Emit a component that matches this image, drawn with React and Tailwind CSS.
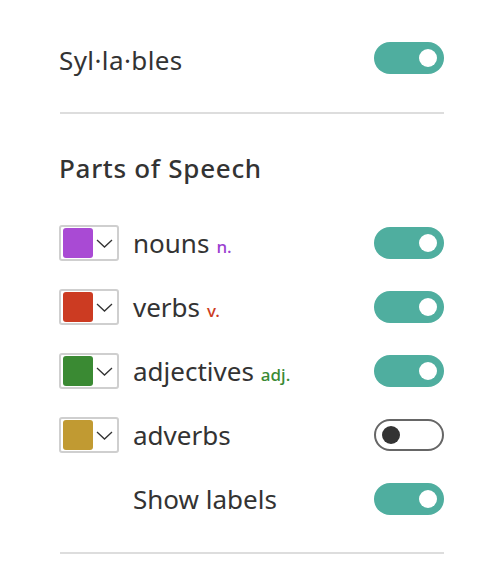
const rows = [
  { label: 'nouns', abbr: 'n.', color: '#a94ad4', abbrColor: 'text-[#9b3fd0]', on: true },
  { label: 'verbs', abbr: 'v.', color: '#cc3b22', abbrColor: 'text-[#cc3b22]', on: true },
  { label: 'adjectives', abbr: 'adj.', color: '#3a8a33', abbrColor: 'text-[#3a8a33]', on: true },
  { label: 'adverbs', abbr: '', color: '#c19a32', abbrColor: '', on: false },
];

function Toggle({ on }) {
  return on ? (
    <div className="w-[70px] h-[32px] rounded-full bg-[#4fae9f] flex items-center justify-end pr-[7px] shrink-0">
      <div className="w-[18px] h-[18px] rounded-full bg-white" />
    </div>
  ) : (
    <div className="w-[70px] h-[32px] rounded-full border-2 border-[#666666] bg-white flex items-center pl-[6px] shrink-0">
      <div className="w-[18px] h-[18px] rounded-full bg-[#333333]" />
    </div>
  );
}

function ColorPicker({ color }) {
  return (
    <div className="w-[60px] h-[36px] rounded-[3px] border-2 border-[#cfcfcf] flex items-center pl-[2px] shrink-0">
      <div className="w-[30px] h-[30px] rounded-[3px]" style={{ backgroundColor: color }} />
      <svg className="ml-[3px]" width="17" height="9" viewBox="0 0 17 9" fill="none">
        <polyline points="1,1 8.5,8 16,1" stroke="#333333" strokeWidth="1.3" />
      </svg>
    </div>
  );
}

export default function App() {
  return (
    <div className="w-[494px] h-[580px] bg-white pl-[59px] pr-[50px] pt-[42px] text-[#333333] font-['Noto_Sans',sans-serif]">
      <div className="flex items-center justify-between h-[32px]">
        <span className="mt-[3px] text-[26px] leading-none tracking-[0.4px]">Syl·la·bles</span>
        <Toggle on />
      </div>
      <div className="mt-[38px] h-[2px] bg-[#dddddd] ml-px" />

      <h2 className="mt-[39px] text-[26px] leading-[30px] font-medium tracking-[0.7px]">Parts of Speech</h2>

      <div className="mt-[42px] flex flex-col gap-[28px]">
        {rows.map((r) => (
          <div key={r.label} className="flex items-center h-[36px]">
            <ColorPicker color={r.color} />
            <span className="ml-[14px] text-[26px] leading-none">{r.label}</span>
            {r.abbr && <span className={`ml-[7px] mt-[6px] text-[17px] leading-none font-medium ${r.abbrColor}`}>{r.abbr}</span>}
            <div className="ml-auto">
              <Toggle on={r.on} />
            </div>
          </div>
        ))}
        <div className="flex items-center h-[36px]">
          <span className="ml-[74px] text-[26px] leading-none">Show labels</span>
          <div className="ml-auto">
            <Toggle on />
          </div>
        </div>
      </div>

      <div className="mt-[35px] h-[2px] bg-[#dddddd] ml-px" />
    </div>
  );
}
